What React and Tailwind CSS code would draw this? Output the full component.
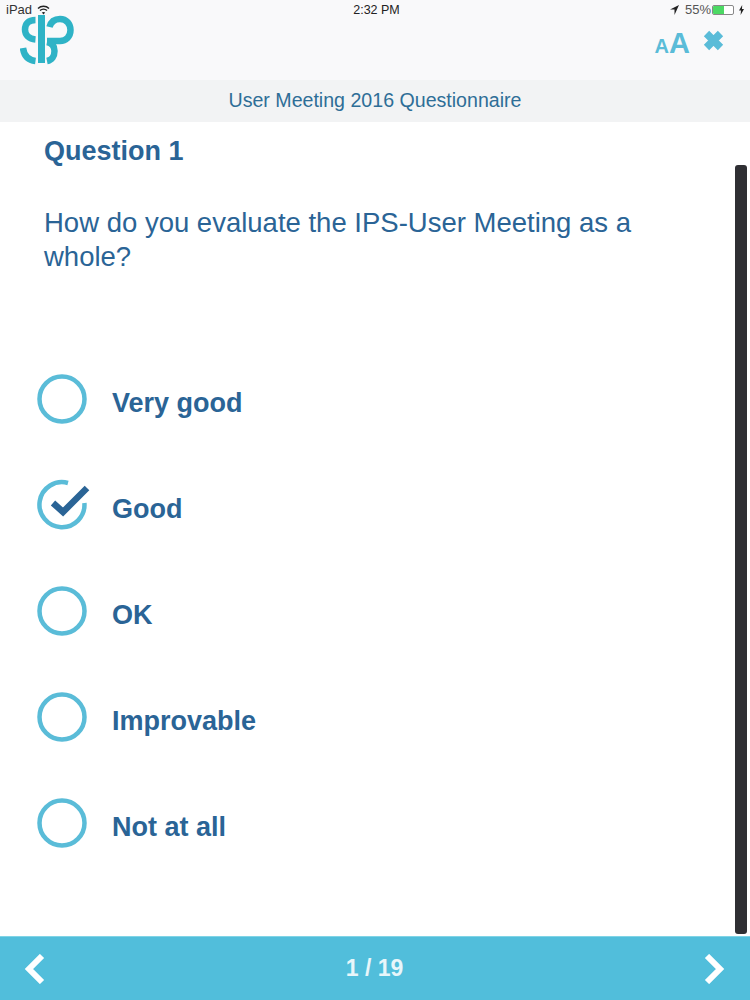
import React from 'react';

const options = ['Very good', 'Good', 'OK', 'Improvable', 'Not at all'];

const Logo = () => (
  <svg width="56" height="52" viewBox="0 0 56 52" fill="none" stroke="#2fb3c6" strokeWidth="6.5">
    <path d="M15.5 7 C8 7 5 11 5 16.5 C5 22 9 26 15.5 26.5" />
    <path d="M21.5 2 V50" strokeWidth="7" />
    <path d="M29.5 14 C31 8.5 35 6 40 6 C46.5 6 50.5 11 50.5 17 C50.5 23.5 46 28 40 28 H27" />
    <path d="M27 29 C32 30 34.5 33 34.5 38 C34.5 43 32 47 27 48" />
    <path d="M3 35 C4 43 8 47 15.5 48" />
  </svg>
);

const Radio = ({ checked }) => (
  <svg width="50" height="50" viewBox="0 0 50 50" fill="none" className="shrink-0 -translate-y-1 overflow-visible">
    {checked ? (
      <>
        <path d="M31 3 A22.5 22.5 0 1 0 47.4 23" stroke="#5abcd8" strokeWidth="4.5" />
        <path d="M16 23 L26 32 L50 8" stroke="#2a6496" strokeWidth="6.5" />
      </>
    ) : (
      <circle cx="25" cy="25" r="22.5" stroke="#5abcd8" strokeWidth="4.5" />
    )}
  </svg>
);

const StatusBar = () => (
  <div className="absolute top-0 left-0 right-0 h-5 flex items-center justify-between pl-[6px] pr-[6px] text-[13px] text-[#333]">
    <div className="flex items-center gap-[5px]">
      <span>iPad</span>
      <svg width="13" height="10" viewBox="0 0 13 10" fill="none" stroke="#222" strokeWidth="1.4">
        <path d="M1 3.5 C4 .5 9 .5 12 3.5" />
        <path d="M3 5.6 C5 3.8 8 3.8 10 5.6" />
        <path d="M6.5 9.6 L4.8 7.6 C5.8 6.8 7.2 6.8 8.2 7.6 Z" fill="#222" stroke="none" />
      </svg>
    </div>
    <span className="absolute left-[3px] right-0 text-center text-[12.5px] text-[#222]">2:32 PM</span>
    <div className="flex items-center gap-[3px]">
      <svg width="9" height="10" viewBox="0 0 9 10" className="mr-[3px]">
        <path d="M9 0 L0 4.5 H4.5 V10 Z" fill="#222" />
      </svg>
      <span className="text-[#555] -mr-[2px]">55%</span>
      <div className="w-[22px] h-[10px] border border-[#888] rounded-[2px] bg-white overflow-hidden">
        <div className="w-[11px] h-full bg-[#4cd964]" />
      </div>
      <svg width="5" height="10" viewBox="0 0 5 10" className="ml-[2px]">
        <path d="M3.2 0 L0 5.6 H2 L1.6 10 L5 4 H3 Z" fill="#222" />
      </svg>
    </div>
  </div>
);

export default function App() {
  return (
    <div className="relative w-[750px] h-[1000px] flex flex-col bg-white font-['Liberation_Sans',sans-serif] overflow-hidden">
      <header className="h-20 bg-[#f9f9fa] flex justify-between pl-5 pr-[26px]">
        <div className="pt-[13px]">
          <Logo />
        </div>
        <div className="flex items-start gap-[13px] pt-[29px]">
          <div className="flex items-baseline font-bold text-[#5abcd8] leading-none">
            <span className="text-[20px]">A</span>
            <span className="text-[29px]">A</span>
          </div>
          <svg width="21" height="21" viewBox="0 0 21 21" className="mt-[1px]">
            <path d="M3.5 3.5 L17.5 17.5 M17.5 3.5 L3.5 17.5" stroke="#5abcd8" strokeWidth="7.5" />
          </svg>
        </div>
      </header>

      <div className="h-[42px] bg-[#f2f3f4] flex items-center justify-center text-[19.6px] text-[#2e6e97]">
        User Meeting 2016 Questionnaire
      </div>

      <main className="flex-1 pl-11 pr-[100px] pt-[12px] text-[#2a6496]">
        <h1 className="text-[27px] leading-[34px] font-bold">Question 1</h1>
        <p className="mt-[38px] text-[27.5px] leading-[34px] w-[600px]">
          How do you evaluate the IPS-User Meeting as a whole?
        </p>
        <ul className="mt-[104px] -ml-[7px] flex flex-col gap-14">
          {options.map((option) => (
            <li key={option} className="flex items-center gap-[25px] h-[50px]">
              <Radio checked={option === 'Good'} />
              <span className="text-[27px] font-bold">{option}</span>
            </li>
          ))}
        </ul>
      </main>

      <footer className="h-16 bg-[#51bedb] flex items-center justify-between pl-6 pr-[25px] border-t border-[#7fd4e6]">
        <svg width="22" height="30" viewBox="0 0 22 30" fill="none" stroke="#fff" strokeWidth="6">
          <path d="M18 2 L5 15 L18 28" />
        </svg>
        <span className="text-[23px] font-bold text-[#e8f6fa]">1 / 19</span>
        <svg width="22" height="30" viewBox="0 0 22 30" fill="none" stroke="#fff" strokeWidth="6">
          <path d="M4 2 L17 15 L4 28" />
        </svg>
      </footer>

      <StatusBar />
      <div className="absolute left-[735px] top-[165px] w-3 h-[769px] rounded-[3px] bg-[#2f2f33]" />
    </div>
  );
}
